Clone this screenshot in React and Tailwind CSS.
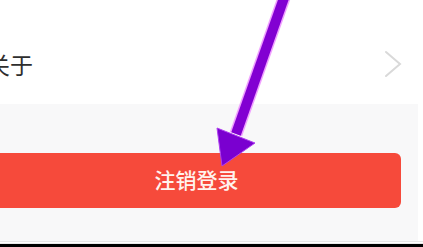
import { ChevronRight } from "lucide-react";

export default function App() {
  return (
    <div
      className="relative w-[423px] h-[247px] overflow-hidden bg-white flex flex-col"
      style={{ fontFamily: '"Noto Sans", "Noto Sans CJK SC", sans-serif' }}
    >
      {/* about row */}
      <div className="h-[104px] flex items-center justify-between shrink-0">
        <span className="-ml-[13px] text-[23px] leading-none text-[#2e2e2e] mt-[26px]">关于</span>
        <svg width="18" height="28" viewBox="0 0 18 28" className="mr-[21px] mt-[24px]" fill="none">
          <path d="M2 2 L16 14 L2 26" stroke="#d9d9d9" strokeWidth="2" strokeLinecap="round" />
        </svg>
      </div>

      {/* logout area */}
      <div className="w-[418px] h-[137px] bg-[#f8f8f9] pt-[49px] shrink-0">
        <button className="-ml-[10px] w-[411px] h-[55px] rounded-[6px] bg-[#f64a3b] text-[#fff3ee] text-[21px] font-medium flex items-center justify-center pl-[2px]">
          注销登录
        </button>
      </div>
      <div className="h-px bg-[#e6e6e6]" />
      <div className="h-px bg-white" />
      <div className="h-px bg-[#e9e9e9]" />
      <div className="flex-1 bg-black" />

      {/* annotation arrow */}
      <svg className="absolute left-0 top-0" width="423" height="247" viewBox="0 0 423 247">
        <line x1="285" y1="-5" x2="236" y2="134" stroke="#f0a0ff" strokeWidth="13" />
        <line x1="285" y1="-5" x2="236" y2="134" stroke="#8200d2" strokeWidth="10" />
        <polygon points="217,128 255,143 222,166" fill="#7a00d0" stroke="#b040f0" strokeWidth="1" strokeLinejoin="round" />
      </svg>
    </div>
  );
}
